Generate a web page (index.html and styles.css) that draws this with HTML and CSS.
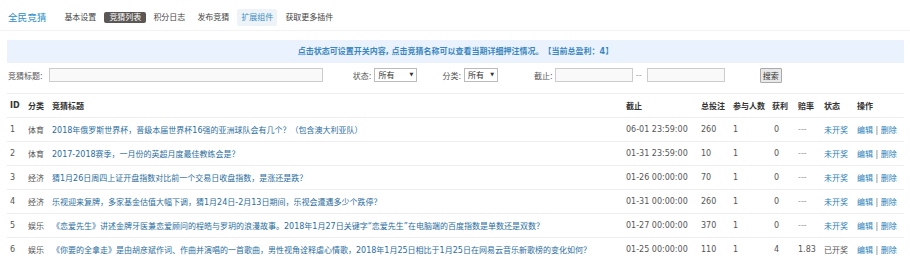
FILE: index.html
```html
<!DOCTYPE html>
<html lang="zh-CN">
<head>
    <meta charset="UTF-8">
    <title>全民竞猜 — 竞猜列表</title>
    <link rel="stylesheet" href="styles.css">
</head>
<body>
    <div class="header">
        <span class="logo">全民竞猜</span>
        <a class="nav-item">基本设置</a>
        <a class="nav-item active">竞猜列表</a>
        <a class="nav-item">积分日志</a>
        <a class="nav-item">发布竞猜</a>
        <a class="nav-item ext">扩展组件</a>
        <a class="nav-item">获取更多插件</a>
    </div>

    <div class="notice">点击状态可设置开关内容, 点击竞猜名称可以查看当期详细押注情况。【当前总盈利：4】</div>

    <form class="search">
        <label class="lbl">竞猜标题:</label>
        <input type="text" class="txt txt-title">
        <label class="lbl lbl-state">状态:</label>
        <span class="sel sel-state"><select><option>所有</option></select></span>
        <label class="lbl lbl-cat">分类:</label>
        <span class="sel sel-cat"><select><option>所有</option></select></span>
        <label class="lbl lbl-end">截止:</label>
        <input type="text" class="txt txt-date">
        <span class="dash">--</span>
        <input type="text" class="txt txt-date">
        <button type="button" class="btn">搜索</button>
    </form>

    <table class="list">
        <colgroup>
            <col style="width:18px"><col style="width:24px"><col style="width:574px">
            <col style="width:75px"><col style="width:32px"><col style="width:39px">
            <col style="width:26px"><col style="width:26px"><col style="width:33px"><col style="width:50px">
        </colgroup>
        <tr class="head">
            <th>ID</th><th>分类</th><th>竞猜标题</th><th>截止</th><th>总投注</th><th>参与人数</th><th>获利</th><th>赔率</th><th>状态</th><th>操作</th>
        </tr>
        <tr>
            <td>1</td><td>体育</td><td><a class="title">2018年俄罗斯世界杯，晋级本届世界杯16强的亚洲球队会有几个？（包含澳大利亚队）</a></td>
            <td>06-01 23:59:00</td><td>260</td><td>1</td><td class="num">0</td><td class="muted">---</td><td><a class="state">未开奖</a></td>
            <td><a class="op">编辑</a> <span class="sep">|</span> <a class="op">删除</a></td>
        </tr>
        <tr>
            <td>2</td><td>体育</td><td><a class="title">2017-2018赛季，一月份的英超月度最佳教练会是？</a></td>
            <td>01-31 23:59:00</td><td>10</td><td>1</td><td class="num">0</td><td class="muted">---</td><td><a class="state">未开奖</a></td>
            <td><a class="op">编辑</a> <span class="sep">|</span> <a class="op">删除</a></td>
        </tr>
        <tr>
            <td>3</td><td>经济</td><td><a class="title">猜1月26日周四上证开盘指数对比前一个交易日收盘指数，是涨还是跌？</a></td>
            <td>01-26 00:00:00</td><td>70</td><td>1</td><td class="num">0</td><td class="muted">---</td><td><a class="state">未开奖</a></td>
            <td><a class="op">编辑</a> <span class="sep">|</span> <a class="op">删除</a></td>
        </tr>
        <tr>
            <td>4</td><td>经济</td><td><a class="title">乐视迎来复牌，多家基金估值大幅下调，猜1月24日-2月13日期间，乐视会遭遇多少个跌停？</a></td>
            <td>01-31 00:00:00</td><td>260</td><td>1</td><td class="num">0</td><td class="muted">---</td><td><a class="state">未开奖</a></td>
            <td><a class="op">编辑</a> <span class="sep">|</span> <a class="op">删除</a></td>
        </tr>
        <tr>
            <td>5</td><td>娱乐</td><td><a class="title">《恋爱先生》讲述金牌牙医兼恋爱顾问的程皓与罗玥的浪漫故事。2018年1月27日关键字“恋爱先生”在电脑端的百度指数是单数还是双数？</a></td>
            <td>01-27 00:00:00</td><td>370</td><td>1</td><td class="num">0</td><td class="muted">---</td><td><a class="state">未开奖</a></td>
            <td><a class="op">编辑</a> <span class="sep">|</span> <a class="op">删除</a></td>
        </tr>
        <tr>
            <td>6</td><td>娱乐</td><td><a class="title">《你要的全拿走》是由胡彦斌作词、作曲并演唱的一首歌曲，男性视角诠释虐心情歌，2018年1月25日相比于1月25日在网易云音乐新歌榜的变化如何？</a></td>
            <td>01-25 00:00:00</td><td>110</td><td>1</td><td class="num">4</td><td>1.83</td><td>已开奖</td>
            <td><a class="op">编辑</a> <span class="sep">|</span> <a class="op">删除</a></td>
        </tr>
    </table>
</body>
</html>
```

FILE: styles.css
```css
body {
    margin: 0;
    background: #fff;
    color: #555;
    font-family: "DejaVu Sans", "Noto Sans CJK SC", sans-serif;
    font-size: 8px;
}
a {
    cursor: pointer;
    text-decoration: none;
}
.header {
    display: flex;
    align-items: center;
    height: 26px;
    padding: 4px 0 0 8px;
    border-bottom: 1px solid #f3f3f3;
}
.logo {
    font-size: 9.6px;
    color: #2a8dc8;
    margin-right: 14px;
}
.nav-item {
    color: #444;
    padding: 2px 4px;
    margin-right: 4px;
    line-height: 11px;
    border-radius: 2px;
}
.nav-item.active {
    background: #5b5755;
    color: #fff;
    padding: 0 5px;
    margin-right: 3px;
}
.nav-item.ext {
    background: #eef3f7;
    color: #3a8ec6;
    padding: 3px 4px;
}
.notice {
    margin: 9px 6px 0 7px;
    height: 23px;
    line-height: 23px;
    background: #eaf3fd;
    color: #3a86c0;
    font-weight: bold;
    text-align: center;
}
.search {
    display: flex;
    align-items: center;
    height: 16px;
    margin: 4px 0 0 8px;
}
.lbl {
    color: #555;
}
.lbl-state { margin-left: 30px; }
.lbl-cat { margin-left: 25px; }
.lbl-end { margin-left: 36px; }
.txt {
    box-sizing: border-box;
    height: 14px;
    margin: 0 0 0 2px;
    border: 1px solid #ccc;
    background: #f9f9f9;
    padding: 0;
}
.txt-title {
    width: 274px;
    margin-left: 6px;
}
.txt-date { width: 78px; }
.dash {
    color: #999;
    margin: 0 0 0 3px;
    width: 9px;
}
.sel {
    position: relative;
    margin-left: 3px;
}
.sel select {
    box-sizing: border-box;
    height: 14px;
    border: 1px solid #bbb;
    background: #fff;
    font: inherit;
    color: #333;
    padding: 0 0 0 3px;
    appearance: none;
    -webkit-appearance: none;
    border-radius: 0;
}
.sel::after {
    content: "▼";
    position: absolute;
    right: 4px;
    top: 3px;
    font-size: 5px;
    color: #333;
    pointer-events: none;
}
.sel-state select { width: 43px; }
.sel-cat select { width: 34px; }
.btn {
    box-sizing: border-box;
    height: 15px;
    width: 22px;
    margin-left: 35px;
    padding: 0;
    font: inherit;
    color: #333;
    background: #e9e9e9;
    border: 1px solid #aaa;
    border-radius: 1px;
}
.list {
    margin: 10px 0 0 7px;
    width: 897px;
    table-layout: fixed;
    border-collapse: collapse;
}
.list th,
.list td {
    height: 23px;
    padding: 0 0 0 3px;
    border-top: 1px solid #eeeeee;
    text-align: left;
    white-space: nowrap;
    overflow: hidden;
}
.list th {
    color: #333;
    font-weight: bold;
}
.list .num {
    padding-left: 5px;
}
.title {
    color: #2a6c9e;
}
.state,
.op {
    color: #2a80b9;
}
.sep {
    color: #777;
}
.muted {
    color: #999;
}
```
